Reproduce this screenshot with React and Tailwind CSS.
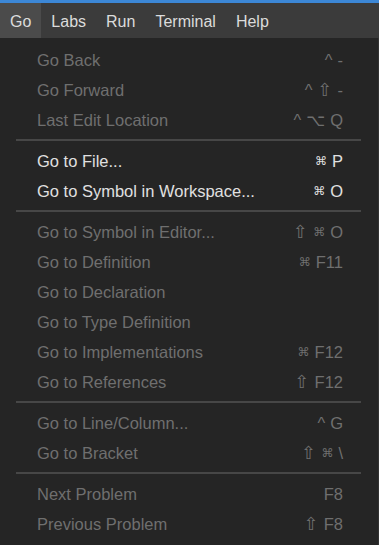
const menus = ["Go", "Labs", "Run", "Terminal", "Help"];

const groups = [
  [
    { label: "Go Back", keys: "^ -" },
    { label: "Go Forward", keys: "^ ⇧ -" },
    { label: "Last Edit Location", keys: "^ ⌥ Q" },
  ],
  [
    { label: "Go to File...", keys: "⌘ P", on: true },
    { label: "Go to Symbol in Workspace...", keys: "⌘ O", on: true },
  ],
  [
    { label: "Go to Symbol in Editor...", keys: "⇧ ⌘ O" },
    { label: "Go to Definition", keys: "⌘ F11" },
    { label: "Go to Declaration" },
    { label: "Go to Type Definition" },
    { label: "Go to Implementations", keys: "⌘ F12" },
    { label: "Go to References", keys: "⇧ F12" },
  ],
  [
    { label: "Go to Line/Column...", keys: "^ G" },
    { label: "Go to Bracket", keys: "⇧ ⌘ \\" },
  ],
  [
    { label: "Next Problem", keys: "F8" },
    { label: "Previous Problem", keys: "⇧ F8" },
  ],
];

function Keys({ keys }) {
  if (!keys) return null;
  return (
    <span className="flex items-center gap-[5px]">
      {keys.split(" ").map((k, i) => {
        if (k === "⌘")
          return (
            <span key={i} className="text-[12px]">
              ⌘
            </span>
          );
        if (k === "⇧")
          return (
            <span key={i} className="text-[18px] leading-none">
              ⇧
            </span>
          );
        return <span key={i}>{k}</span>;
      })}
    </span>
  );
}

export default function App() {
  return (
    <div
      className="w-[379px] h-[545px] overflow-hidden bg-[#252525] text-[16.5px]"
      style={{ fontFamily: '"Liberation Sans", "DejaVu Sans", sans-serif' }}
    >
      <div className="h-[3px] bg-[#3c87d6]" />
      <div className="h-[35px] flex bg-[#3b3b3b] text-[#dcdcdc] text-[16px]">
        {menus.map((m, i) => (
          <div
            key={m}
            className={
              i === 0
                ? "px-[10px] pt-[2px] flex items-center bg-[#4b4b4b]"
                : "px-[10px] pt-[2px] flex items-center"
            }
          >
            {m}
          </div>
        ))}
      </div>

      <div className="pt-[7px] border-r border-[#333333] h-full">
        {groups.map((g, gi) => (
          <div key={gi}>
            {gi > 0 && (
              <div className="mt-[4px] mb-[5px] ml-[16px] mr-[17px] h-[2px] bg-[#474747]" />
            )}
            {g.map((item) => (
              <div
                key={item.label}
                className={
                  item.on
                    ? "h-[30px] flex items-center justify-between pl-[37px] pr-[35px] text-[#e0e0e0]"
                    : "h-[30px] flex items-center justify-between pl-[37px] pr-[35px] text-[#6f6f6f]"
                }
              >
                <span>{item.label}</span>
                <Keys keys={item.keys} />
              </div>
            ))}
          </div>
        ))}
      </div>
    </div>
  );
}
